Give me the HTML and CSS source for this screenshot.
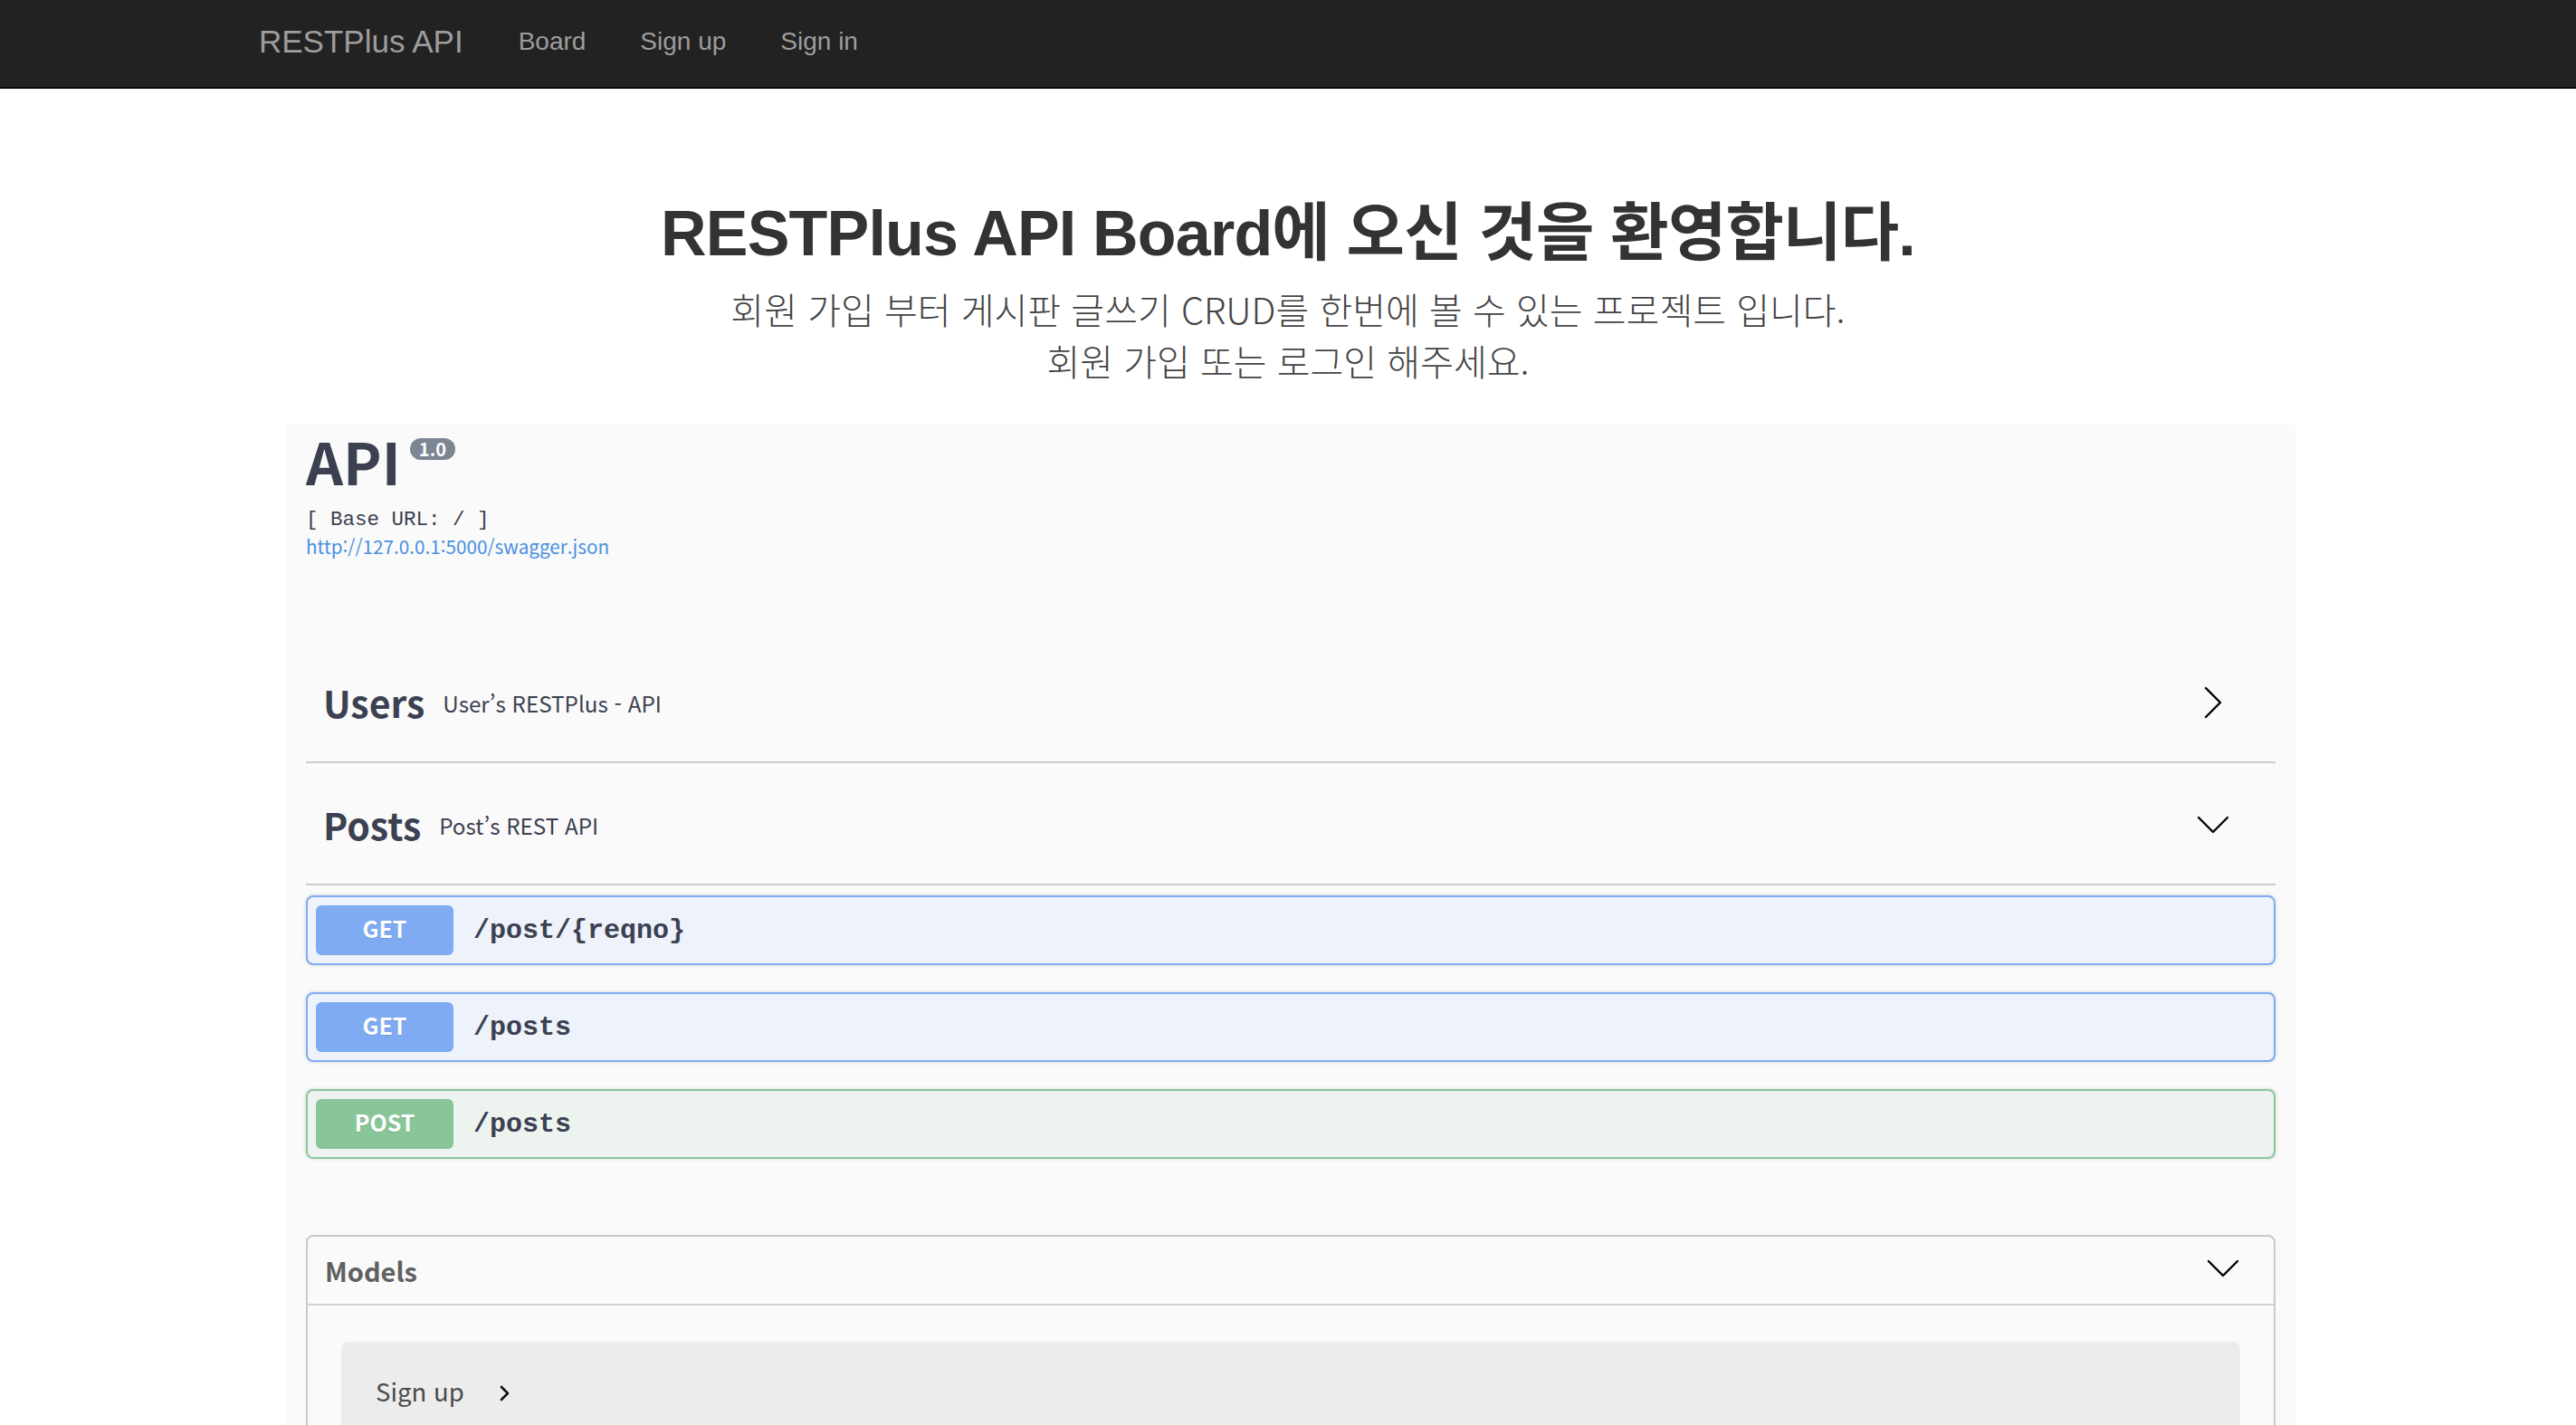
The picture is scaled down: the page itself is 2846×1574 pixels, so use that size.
FILE: index.html
```html
<!DOCTYPE html>
<html lang="ko">
<head>
<meta charset="utf-8">
<title>RESTPlus API</title>
<link rel="stylesheet" href="styles.css">
</head>
<body>
<nav class="navbar">
  <div class="nav-container">
    <a class="brand" href="#">RESTPlus API</a>
    <ul class="nav-links">
      <li><a href="#">Board</a></li>
      <li><a href="#">Sign up</a></li>
      <li><a href="#">Sign in</a></li>
    </ul>
  </div>
</nav>

<header class="jumbotron">
  <h1>RESTPlus API Board에 오신 것을 환영합니다.</h1>
  <p>회원 가입 부터 게시판 글쓰기 CRUD를 한번에 볼 수 있는 프로젝트 입니다.<br>회원 가입 또는 로그인 해주세요.</p>
</header>

<main class="swagger">
  <section class="info">
    <div class="title-row">
      <h2 class="title">API</h2>
      <span class="version">1.0</span>
    </div>
    <div class="base-url">[ Base URL: / ]</div>
    <a class="spec-link" href="#">http://127.0.0.1:5000/swagger.json</a>
  </section>

  <section class="tags">
    <div class="tag-row">
      <div class="tag-title">
        <span class="tag-name">Users</span>
        <span class="tag-desc">User’s RESTPlus - API</span>
      </div>
      <svg class="chev" viewBox="0 0 40 40" width="40" height="40"><polyline points="12,4 28,20 12,36" fill="none" stroke="#000" stroke-width="2.4" stroke-linecap="round" stroke-linejoin="round"/></svg>
    </div>
    <div class="tag-row">
      <div class="tag-title">
        <span class="tag-name">Posts</span>
        <span class="tag-desc">Post’s REST API</span>
      </div>
      <svg class="chev" viewBox="0 0 40 40" width="40" height="40"><polyline points="4,12 20,28 36,12" fill="none" stroke="#000" stroke-width="2.4" stroke-linecap="round" stroke-linejoin="round"/></svg>
    </div>

    <div class="ops">
      <div class="op op-get">
        <span class="method">GET</span>
        <span class="path">/post/{reqno}</span>
      </div>
      <div class="op op-get">
        <span class="method">GET</span>
        <span class="path">/posts</span>
      </div>
      <div class="op op-post">
        <span class="method">POST</span>
        <span class="path">/posts</span>
      </div>
    </div>
  </section>

  <section class="models">
    <div class="models-head">
      <span class="models-title">Models</span>
      <svg class="chev models-chev" viewBox="0 0 40 40" width="40" height="40"><polyline points="4,12 20,28 36,12" fill="none" stroke="#000" stroke-width="2.4" stroke-linecap="round" stroke-linejoin="round"/></svg>
    </div>
    <div class="models-body">
      <div class="model-box">
        <span class="model-title">Sign up</span>
        <svg class="model-toggle" viewBox="0 0 14 18" width="14" height="18"><polyline points="4,2 11,9 4,16" fill="none" stroke="#111" stroke-width="2.6" stroke-linecap="round" stroke-linejoin="round"/></svg>
      </div>
    </div>
  </section>
</main>
</body>
</html>
```

FILE: styles.css
```css
* { box-sizing: border-box; }

body {
  margin: 0;
  background: #fff;
  font-family: "Liberation Sans", "Noto Sans CJK KR", sans-serif;
}

/* ---------- navbar ---------- */
.navbar {
  height: 98px;
  background: #222;
  border-bottom: 2px solid #080808;
}
.nav-container {
  width: 2334px;
  margin: 0 auto;
  padding: 0 30px 4px;
  height: 100%;
  display: flex;
  align-items: center;
}
.brand {
  font-size: 35px;
  color: #9d9d9d;
  text-decoration: none;
  padding-right: 31px;
}
.nav-links {
  display: flex;
  list-style: none;
  margin: 0;
  padding: 0;
}
.nav-links a {
  display: block;
  padding: 0 30px;
  font-size: 28px;
  color: #9d9d9d;
  text-decoration: none;
}

/* ---------- jumbotron ---------- */
.jumbotron {
  text-align: center;
  padding: 118px 0 42px;
  color: #333;
}
.jumbotron h1 {
  margin: 0;
  font-size: 70px;
  line-height: 84px;
  font-weight: 700;
  letter-spacing: -0.8px;
}
.jumbotron p {
  margin: 13px 0 0;
  font-family: "Noto Sans CJK KR", sans-serif;
  font-size: 40px;
  line-height: 57px;
  font-weight: 300;
  color: #444;
}

/* ---------- swagger panel ---------- */
.swagger {
  width: 2220px;
  margin-left: calc(50% - 1107px);
  padding: 0 22px 60px;
  background: #fafafa;
  font-family: "Noto Sans CJK KR", sans-serif;
  color: #3b4151;
}

.info {
  padding-top: 7px;
  margin-bottom: 98px;
}
.title-row {
  display: flex;
  align-items: flex-start;
}
.title {
  margin: 0;
  font-size: 64px;
  line-height: 64px;
  font-weight: 700;
  color: #3b4151;
}
.version {
  margin: 8px 0 0 10px;
  height: 24px;
  padding: 0 10px;
  border-radius: 12px;
  background: #7d8492;
  color: #fff;
  font-size: 20px;
  line-height: 23px;
  font-weight: 700;
}
.base-url {
  margin-top: 19px;
  font-family: "Liberation Mono", monospace;
  font-size: 22.5px;
  line-height: 30px;
  color: #3b4151;
}
.spec-link {
  display: block;
  font-size: 20.7px;
  line-height: 28px;
  color: #4990e2;
  text-decoration: none;
}

/* ---------- tags ---------- */
.tag-row {
  display: flex;
  align-items: center;
  height: 128px;
  padding-left: 19px;
  border-bottom: 2px solid #cbccd0;
  margin-bottom: 7px;
}
.tag-title {
  flex: 1;
  display: flex;
  align-items: center;
  padding-bottom: 7px;
}
.tag-name {
  font-size: 41px;
  font-weight: 700;
}
.tag-desc {
  margin-left: 20px;
  font-size: 24.2px;
  padding-top: 4px;
}
.chev {
  display: block;
  margin-right: 49px;
  margin-bottom: 5px;
}

/* ---------- operations ---------- */
.ops {
  padding-top: 4px;
}
.op {
  display: flex;
  align-items: center;
  padding: 9px;
  border: 2px solid;
  border-radius: 8px;
  margin-bottom: 30px;
  box-shadow: 0 0 4px rgba(0, 0, 0, 0.16);
}
.op-get {
  background: #edf2fb;
  border-color: #7eabf1;
}
.op-post {
  background: #edf4ef;
  border-color: #88c79a;
}
.method {
  display: flex;
  align-items: center;
  justify-content: center;
  width: 152px;
  height: 55px;
  padding-bottom: 5px;
  border-radius: 6px;
  color: #fff;
  font-size: 25px;
  font-weight: 700;
  text-shadow: 0 1px 0 rgba(0, 0, 0, 0.12);
}
.op-get .method { background: #7eabf1; }
.op-post .method { background: #88c598; }
.path {
  padding-left: 22px;
  font-family: "Liberation Mono", monospace;
  font-weight: 700;
  font-size: 30px;
  color: #3b4151;
}

/* ---------- models ---------- */
.models {
  margin-top: 84px;
  border: 2px solid #c9cacd;
  border-radius: 8px;
}
.models-head {
  display: flex;
  align-items: center;
  height: 76px;
  padding-left: 19px;
  border-bottom: 2px solid #d0d1d4;
}
.models-title {
  flex: 1;
  font-size: 29px;
  font-weight: 700;
  color: #606060;
}
.models-chev {
  margin-right: 36px;
}
.models-body {
  padding: 40px 37px;
}
.model-box {
  display: flex;
  align-items: center;
  padding: 36px 38px 60px;
  border-radius: 8px;
  background: #ececec;
}
.model-title {
  font-size: 27.5px;
  line-height: 36px;
  color: #4a4a4a;
}
.model-toggle {
  display: block;
  margin-left: 37px;
  margin-top: 6px;
}
```
